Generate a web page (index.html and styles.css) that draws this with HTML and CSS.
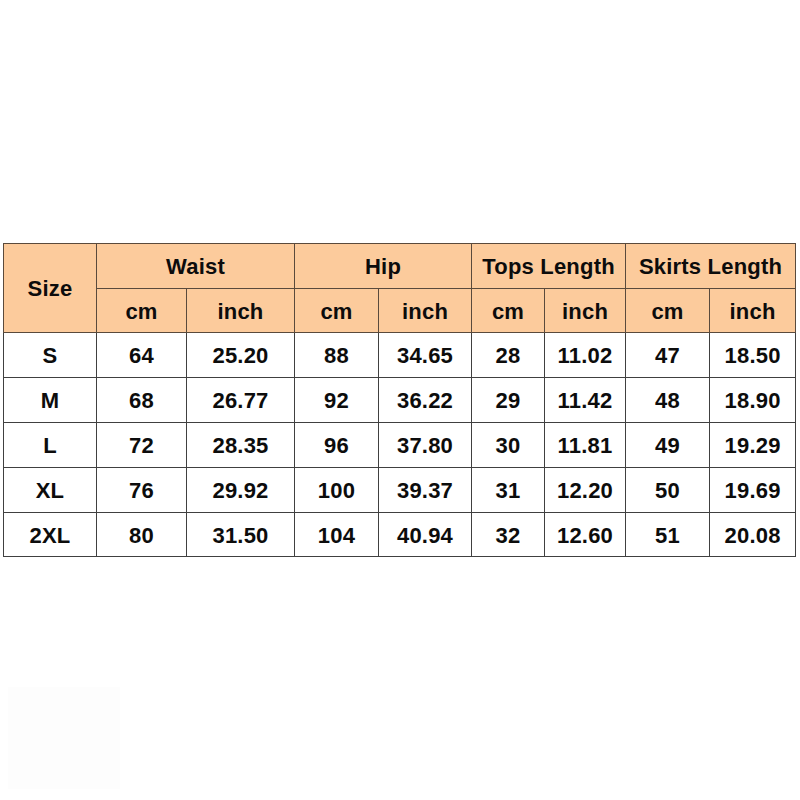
FILE: index.html
```html
<!DOCTYPE html>
<html>
<head>
<meta charset="utf-8">
<link rel="stylesheet" href="styles.css">
</head>
<body>
<main class="page">
  <table class="size-chart">
    <colgroup>
      <col class="c-size"><col class="c-wcm"><col class="c-win"><col class="c-hcm"><col class="c-hin"><col class="c-tcm"><col class="c-tin"><col class="c-scm"><col class="c-sin">
    </colgroup>
    <thead>
      <tr class="r-group">
        <th rowspan="2">Size</th>
        <th colspan="2">Waist</th>
        <th colspan="2">Hip</th>
        <th colspan="2">Tops Length</th>
        <th colspan="2">Skirts Length</th>
      </tr>
      <tr class="r-unit">
        <th>cm</th><th>inch</th><th>cm</th><th>inch</th><th>cm</th><th>inch</th><th>cm</th><th>inch</th>
      </tr>
    </thead>
    <tbody>
      <tr class="r-a"><td>S</td><td>64</td><td>25.20</td><td>88</td><td>34.65</td><td>28</td><td>11.02</td><td>47</td><td>18.50</td></tr>
      <tr class="r-a"><td>M</td><td>68</td><td>26.77</td><td>92</td><td>36.22</td><td>29</td><td>11.42</td><td>48</td><td>18.90</td></tr>
      <tr class="r-a"><td>L</td><td>72</td><td>28.35</td><td>96</td><td>37.80</td><td>30</td><td>11.81</td><td>49</td><td>19.29</td></tr>
      <tr class="r-a"><td>XL</td><td>76</td><td>29.92</td><td>100</td><td>39.37</td><td>31</td><td>12.20</td><td>50</td><td>19.69</td></tr>
      <tr class="r-b"><td>2XL</td><td>80</td><td>31.50</td><td>104</td><td>40.94</td><td>32</td><td>12.60</td><td>51</td><td>20.08</td></tr>
    </tbody>
  </table>
  <div class="ghost"></div>
</main>
</body>
</html>
```
FILE: styles.css
```css
html, body {
  margin: 0;
  padding: 0;
  background: #ffffff;
}
.page {
  padding: 243px 0 0 3px;
}
.size-chart {
  border-collapse: collapse;
  table-layout: fixed;
  width: 792px;
  font-family: "Liberation Sans", Arial, sans-serif;
  font-weight: bold;
  font-size: 22px;
  color: #0c0c0c;
}
.c-size { width: 93px; }
.c-wcm { width: 90px; }
.c-win { width: 108px; }
.c-hcm { width: 84px; }
.c-hin { width: 93px; }
.c-tcm { width: 73px; }
.c-tin { width: 81px; }
.c-scm { width: 84px; }
.c-sin { width: 86px; }
.size-chart th,
.size-chart td {
  border: 1px solid #404040;
  padding: 2px 0 0;
  text-align: center;
  vertical-align: middle;
  white-space: nowrap;
  letter-spacing: 0.2px;
}
.size-chart th {
  background: #fccb9c;
  font-weight: bold;
  border-color: #5a4a3c;
}
.r-group th { height: 42px; }
.r-unit th { height: 41px; }
.r-a td { height: 42px; }
.r-b td { height: 41px; }
.ghost {
  width: 112px;
  height: 102px;
  margin: 130px 0 0 5px;
  background: #fdfdfd;
}
```
